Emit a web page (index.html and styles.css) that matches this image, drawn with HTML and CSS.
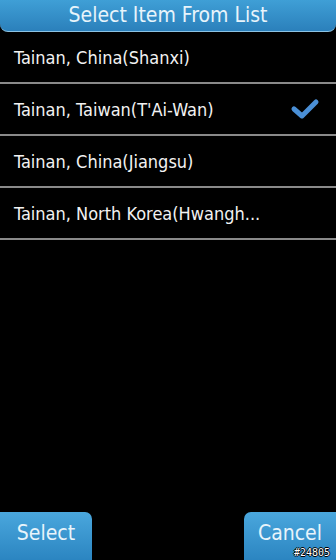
FILE: index.html
```html
<!DOCTYPE html>
<html>
<head>
<meta charset="utf-8">
<link rel="stylesheet" href="styles.css">
</head>
<body>
<div class="screen">
  <header class="title">Select Item From List</header>
  <ul class="list">
    <li class="item">Tainan, China(Shanxi)</li>
    <li class="item">Tainan, Taiwan(T'Ai-Wan)
      <svg class="check" width="30" height="24" viewBox="0 0 30 24"><path d="M4 12 L12 19 L26 5" fill="none" stroke="#4a8fd6" stroke-width="5" stroke-linecap="round" stroke-linejoin="round"/></svg>
    </li>
    <li class="item">Tainan, China(Jiangsu)</li>
    <li class="item">Tainan, North Korea(Hwangh...</li>
  </ul>
  <footer class="bar">
    <button class="btn btn-left">Select</button>
    <button class="btn btn-right">Cancel</button>
  </footer>
  <span class="mark">#24805</span>
</div>
</body>
</html>
```
FILE: styles.css
```css
html, body { margin: 0; padding: 0; background: #000; }
.screen {
  position: relative;
  width: 336px;
  height: 560px;
  display: flex;
  flex-direction: column;
  background: #000;
  font-family: "DejaVu Sans Condensed", "Liberation Sans", sans-serif;
  color: #f2f2f2;
}
.title {
  height: 31px;
  background: linear-gradient(#3f9fd6, #2b80bb);
  border-radius: 0 0 8px 8px;
  border-bottom: 1px solid #8cc3e3;
  text-align: center;
  font-size: 21px;
  line-height: 30px;
  color: #e8f4fb;
}
.list { list-style: none; margin: 0; padding: 0; }
.item {
  height: 50px;
  border-bottom: 2px solid #8a8a8a;
  display: flex;
  align-items: center;
  justify-content: space-between;
  padding: 0 16px 0 14px;
  font-size: 18px;
}
.check { display: block; }
.bar {
  margin-top: auto;
  display: flex;
  justify-content: space-between;
  height: 48px;
}
.btn {
  width: 92px;
  height: 48px;
  border: none;
  background: linear-gradient(#4aa7dd, #2b85c1);
  color: #e8f4fb;
  font-family: inherit;
  font-size: 21px;
  padding: 0 0 6px 0;
}
.btn-left { border-radius: 0 7px 0 0; }
.btn-right { border-radius: 7px 0 0 0; }
.mark {
  position: absolute;
  right: 6px;
  bottom: 2px;
  font-family: "DejaVu Sans Mono", monospace;
  font-size: 10px;
  line-height: 11px;
  color: #fff;
  text-shadow: 1px 0 #000, -1px 0 #000, 0 1px #000, 0 -1px #000;
}
```
